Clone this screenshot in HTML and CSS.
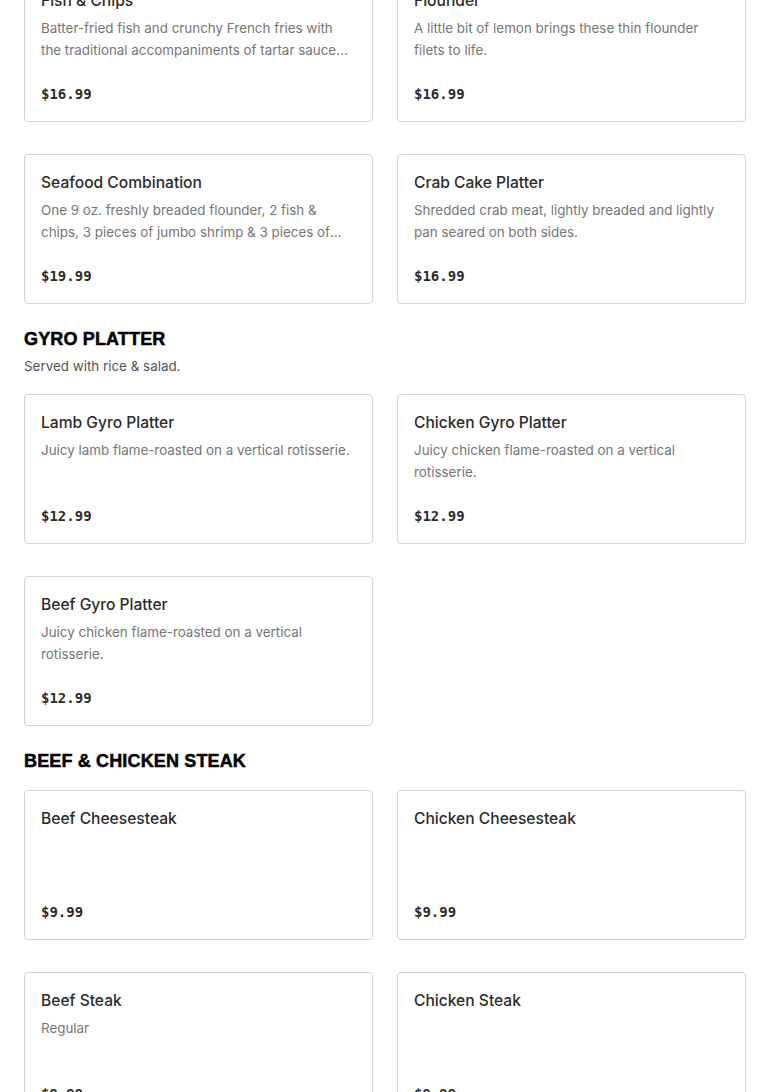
FILE: index.html
```html
<!DOCTYPE html>
<html lang="en">
<head>
<meta charset="utf-8">
<title>Menu</title>
<link rel="stylesheet" href="styles.css">
</head>
<body>
<main class="menu">
  <section class="section first">
    <div class="grid">
      <article class="card">
        <h3 class="card-title">Fish &amp; Chips</h3>
        <p class="card-desc">Batter-fried fish and crunchy French fries with the traditional accompaniments of tartar sauce and lemon wedges.</p>
        <div class="card-price">$16.99</div>
      </article>
      <article class="card">
        <h3 class="card-title">Flounder</h3>
        <p class="card-desc">A little bit of lemon brings these thin flounder filets to life.</p>
        <div class="card-price">$16.99</div>
      </article>
      <article class="card">
        <h3 class="card-title">Seafood Combination</h3>
        <p class="card-desc">One 9 oz. freshly breaded flounder, 2 fish &amp; chips, 3 pieces of jumbo shrimp &amp; 3 pieces of scallops.</p>
        <div class="card-price">$19.99</div>
      </article>
      <article class="card">
        <h3 class="card-title">Crab Cake Platter</h3>
        <p class="card-desc">Shredded crab meat, lightly breaded and lightly pan seared on both sides.</p>
        <div class="card-price">$16.99</div>
      </article>
    </div>
  </section>

  <section class="section">
    <h2 class="section-title">GYRO PLATTER</h2>
    <p class="section-sub">Served with rice &amp; salad.</p>
    <div class="grid">
      <article class="card">
        <h3 class="card-title">Lamb Gyro Platter</h3>
        <p class="card-desc">Juicy lamb flame-roasted on a vertical rotisserie.</p>
        <div class="card-price">$12.99</div>
      </article>
      <article class="card">
        <h3 class="card-title">Chicken Gyro Platter</h3>
        <p class="card-desc">Juicy chicken flame-roasted on a vertical rotisserie.</p>
        <div class="card-price">$12.99</div>
      </article>
      <article class="card">
        <h3 class="card-title">Beef Gyro Platter</h3>
        <p class="card-desc">Juicy chicken flame-roasted on a vertical rotisserie.</p>
        <div class="card-price">$12.99</div>
      </article>
    </div>
  </section>

  <section class="section">
    <h2 class="section-title no-sub">BEEF &amp; CHICKEN STEAK</h2>
    <div class="grid">
      <article class="card">
        <h3 class="card-title">Beef Cheesesteak</h3>
        <p class="card-desc"></p>
        <div class="card-price">$9.99</div>
      </article>
      <article class="card">
        <h3 class="card-title">Chicken Cheesesteak</h3>
        <p class="card-desc"></p>
        <div class="card-price">$9.99</div>
      </article>
      <article class="card">
        <h3 class="card-title">Beef Steak</h3>
        <p class="card-desc">Regular</p>
        <div class="card-price">$9.99</div>
      </article>
      <article class="card">
        <h3 class="card-title">Chicken Steak</h3>
        <p class="card-desc"></p>
        <div class="card-price">$9.99</div>
      </article>
    </div>
  </section>
</main>
</body>
</html>
```

FILE: styles.css
```css
* { box-sizing: border-box; }

html, body {
  margin: 0;
  padding: 0;
  background: #ffffff;
}

body {
  font-family: Inter, "Liberation Sans", Arial, sans-serif;
  color: #2d2d2d;
  overflow: hidden;
}

.menu {
  padding: 0 24px;
  margin-top: -28px;
}

.section {
  padding-top: 23px;
}

.section.first {
  padding-top: 0;
}

.section-title {
  margin: 0;
  font-family: "Liberation Sans", Arial, sans-serif;
  font-size: 18px;
  line-height: 24px;
  font-weight: 900;
  color: #000000;
  letter-spacing: 0.15px;
  -webkit-text-stroke: 0.5px #000;
}

.section-title.no-sub {
  margin-bottom: 17px;
}

.section-sub {
  margin: 5px 0 18px;
  font-size: 13.4px;
  line-height: 20px;
  color: #555555;
}

.grid {
  display: grid;
  grid-template-columns: 1fr 1fr;
  column-gap: 24px;
  row-gap: 32px;
}

.card {
  display: flex;
  flex-direction: column;
  height: 150px;
  padding: 16px;
  border: 1px solid #d4d4d4;
  border-radius: 4px;
  background: #ffffff;
}

.card-title {
  margin: 0;
  font-size: 15.6px;
  line-height: 24px;
  font-weight: 500;
  color: #2b2b2b;
}

.card-desc {
  margin: 4px 0 0;
  font-size: 13.4px;
  line-height: 22px;
  color: #767676;
  display: -webkit-box;
  -webkit-line-clamp: 2;
  -webkit-box-orient: vertical;
  overflow: hidden;
}

.card-price {
  margin-top: auto;
  margin-bottom: 1px;
  font-family: "DejaVu Sans Mono", "Liberation Mono", monospace;
  font-size: 14px;
  line-height: 20px;
  font-weight: 700;
  color: #2b2b2b;
}
```
